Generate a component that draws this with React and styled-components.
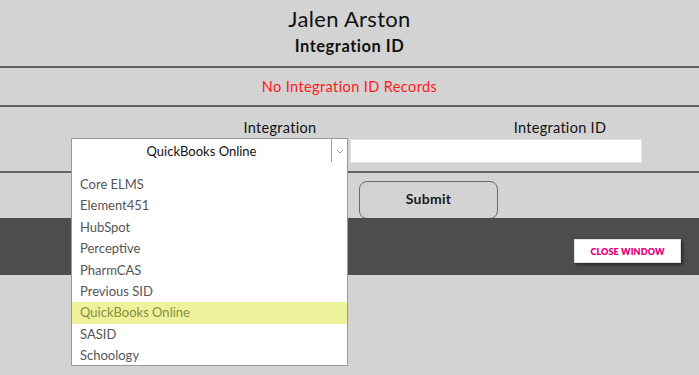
import React from "react";
import styled, { createGlobalStyle } from "styled-components";

const Global = createGlobalStyle`
  html, body { margin: 0; padding: 0; }
  body {
    background: #d3d3d3;
    font-family: Lato, "Open Sans", sans-serif;
    color: #111;
    width: 699px;
    height: 375px;
    overflow: hidden;
  }
`;

const Page = styled.div`
  position: relative;
  width: 699px;
  height: 375px;
  display: flex;
  flex-direction: column;
`;

const Header = styled.header`
  height: 66px;
  display: flex;
  flex-direction: column;
  align-items: center;
`;

const Name = styled.h1`
  margin: 6px 0 0;
  font-size: 22px;
  font-weight: 400;
  line-height: 26px;
  letter-spacing: 0.3px;
`;

const Subtitle = styled.h2`
  margin: 4px 0 0;
  font-size: 16.5px;
  font-weight: 700;
  line-height: 20px;
  letter-spacing: 0.5px;
`;

const Divider = styled.hr`
  margin: 0;
  border: 0;
  height: 2px;
  background: #626262;
`;

const Message = styled.div`
  height: 37px;
  display: flex;
  align-items: center;
  justify-content: center;
  color: #ff1a1a;
  font-size: 14.5px;
  letter-spacing: 0.4px;
`;

const FormSection = styled.div`
  height: 64px;
  display: flex;
  flex-direction: column;
`;

const LabelRow = styled.div`
  display: grid;
  grid-template-columns: 280px 280px;
  padding-left: 140px;
  margin-top: 9px;
  height: 22px;
  align-items: center;
`;

const Label = styled.div`
  text-align: center;
  font-size: 14.5px;
  letter-spacing: 0.3px;
  color: #111;
`;

const FieldRow = styled.div`
  display: flex;
  align-items: flex-start;
  gap: 2px;
  padding-left: 71px;
`;

const Select = styled.div`
  position: relative;
  box-sizing: border-box;
  width: 277px;
  height: 26px;
  border: 1px solid #9a9a9a;
  background: #fff;
  display: flex;
`;

const SelectValue = styled.div`
  flex: 1;
  display: flex;
  align-items: center;
  justify-content: center;
  font-size: 13px;
  color: #111;
`;

const Chevron = styled.div`
  width: 15px;
  border-left: 1px solid #9a9a9a;
  display: flex;
  align-items: center;
  justify-content: center;
`;

const TextInput = styled.div`
  box-sizing: border-box;
  width: 292px;
  height: 24px;
  margin-top: 1px;
  background: #fff;
  border: 1px solid #e4e4e4;
`;

const SubmitRow = styled.div`
  height: 45px;
  display: flex;
  align-items: flex-start;
  padding-left: 359px;
  padding-top: 8px;
  box-sizing: border-box;
`;

const SubmitButton = styled.button`
  box-sizing: border-box;
  width: 139px;
  height: 38px;
  padding: 0 0 3px;
  border: 1px solid #6a6a6a;
  border-radius: 8px;
  background: transparent;
  font-family: inherit;
  font-size: 14px;
  font-weight: 700;
  letter-spacing: 0.3px;
  color: #1a1a1a;
`;

const Footer = styled.footer`
  height: 57px;
  background: #4d4d4d;
  display: flex;
  justify-content: flex-end;
  align-items: flex-start;
  padding: 21px 18px 0 0;
  box-sizing: border-box;
`;

const CloseButton = styled.button`
  box-sizing: border-box;
  width: 107px;
  height: 24px;
  background: #fff;
  border: 1px solid #e0e0e0;
  box-shadow: 2px 2px 3px rgba(0, 0, 0, 0.45);
  font-family: inherit;
  font-size: 9px;
  font-weight: 800;
  color: #e0007a;
  letter-spacing: 0.1px;
  padding: 0;
`;

const Dropdown = styled.ul`
  position: absolute;
  left: 71px;
  top: 162px;
  box-sizing: border-box;
  width: 277px;
  height: 204px;
  margin: 0;
  padding: 12px 0 0;
  list-style: none;
  background: #fff;
  border: 1px solid #9a9a9a;
  border-top: none;
  overflow: hidden;
`;

const Option = styled.li`
  height: 21.4px;
  line-height: 21.4px;
  padding-left: 8px;
  font-size: 13px;
  color: ${(p) => (p.$active ? "#8c8c3c" : "#555")};
  background: ${(p) => (p.$active ? "#eef39b" : "transparent")};
`;

const options = [
  "Core ELMS",
  "Element451",
  "HubSpot",
  "Perceptive",
  "PharmCAS",
  "Previous SID",
  "QuickBooks Online",
  "SASID",
  "Schoology",
];

export default function App() {
  return (
    <Page>
      <Global />
      <Header>
        <Name>Jalen Arston</Name>
        <Subtitle>Integration ID</Subtitle>
      </Header>
      <Divider />
      <Message>No Integration ID Records</Message>
      <Divider />
      <FormSection>
        <LabelRow>
          <Label>Integration</Label>
          <Label>Integration ID</Label>
        </LabelRow>
        <FieldRow>
          <Select>
            <SelectValue>QuickBooks Online</SelectValue>
            <Chevron>
              <svg width="8" height="5" viewBox="0 0 8 5">
                <path d="M1 1 L4 4 L7 1" fill="none" stroke="#9a9a9a" strokeWidth="1" />
              </svg>
            </Chevron>
          </Select>
          <TextInput />
        </FieldRow>
      </FormSection>
      <Divider />
      <SubmitRow>
        <SubmitButton>Submit</SubmitButton>
      </SubmitRow>
      <Footer>
        <CloseButton>CLOSE WINDOW</CloseButton>
      </Footer>
      <Dropdown>
        {options.map((o) => (
          <Option key={o} $active={o === "QuickBooks Online"}>
            {o}
          </Option>
        ))}
      </Dropdown>
    </Page>
  );
}
